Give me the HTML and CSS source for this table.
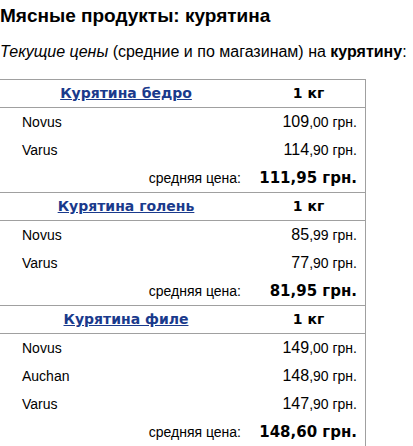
FILE: index.html
```html
<!DOCTYPE html>
<html lang="uk">
<head>
<meta charset="utf-8">
<title>Мясные продукты: курятина</title>
<link rel="stylesheet" href="styles.css">
</head>
<body>
<h1 class="title">Мясные продукты: курятина</h1>
<p class="intro"><em>Текущие цены</em> (средние и по магазинам) на <strong>курятину</strong>:</p>
<table class="prices">
  <colgroup><col class="col-name"><col class="col-price"></colgroup>
  <tbody>
    <tr class="head"><td class="prod"><a href="#">Курятина бедро</a></td><td class="unit">1 кг</td></tr>
    <tr><td class="shop">Novus</td><td class="price"><span class="int">109</span>,00 грн.</td></tr>
    <tr><td class="shop">Varus</td><td class="price"><span class="int">114</span>,90 грн.</td></tr>
    <tr><td class="avg-label">средняя цена:</td><td class="avg">111,95 грн.</td></tr>

    <tr class="head"><td class="prod"><a href="#">Курятина голень</a></td><td class="unit">1 кг</td></tr>
    <tr><td class="shop">Novus</td><td class="price"><span class="int">85</span>,99 грн.</td></tr>
    <tr><td class="shop">Varus</td><td class="price"><span class="int">77</span>,90 грн.</td></tr>
    <tr><td class="avg-label">средняя цена:</td><td class="avg">81,95 грн.</td></tr>

    <tr class="head"><td class="prod"><a href="#">Курятина филе</a></td><td class="unit">1 кг</td></tr>
    <tr><td class="shop">Novus</td><td class="price"><span class="int">149</span>,00 грн.</td></tr>
    <tr><td class="shop">Auchan</td><td class="price"><span class="int">148</span>,90 грн.</td></tr>
    <tr><td class="shop">Varus</td><td class="price"><span class="int">147</span>,90 грн.</td></tr>
    <tr><td class="avg-label">средняя цена:</td><td class="avg">148,60 грн.</td></tr>
  </tbody>
</table>
</body>
</html>
```
FILE: styles.css
```css
html, body {
  margin: 0;
  padding: 0;
  background: #fff;
}
body {
  font-family: "Liberation Sans", Arial, sans-serif;
  color: #000;
}
.title {
  margin: 5px 0 0;
  font-size: 19px;
  line-height: 22px;
  font-weight: bold;
}
.intro {
  margin: 16px 0 0;
  font-size: 16px;
  line-height: 18px;
}
.prices {
  margin-top: 18px;
  width: 366px;
  border-collapse: separate;
  border-spacing: 0;
  border-right: 1px solid #a0a0a0;
  table-layout: fixed;
}
.col-name { width: 252px; }
.prices td {
  padding: 0;
  font-size: 14px;
  line-height: 28px;
  vertical-align: middle;
}
.head td {
  border-top: 1px solid #a0a0a0;
  border-bottom: 1px solid #a0a0a0;
  line-height: 27px;
  font-family: "DejaVu Sans", Verdana, sans-serif;
  font-weight: bold;
  text-align: center;
}
.prod a {
  color: #1a3a8c;
  text-decoration: underline;
}
.unit {
  color: #000;
}
.shop {
  padding-left: 22px !important;
}
.price {
  text-align: right;
  padding-right: 8px !important;
}
.int {
  font-size: 16px;
}
.avg-label {
  text-align: right;
  padding-right: 11px !important;
}
.avg {
  text-align: right;
  padding-right: 8px !important;
  font-family: "DejaVu Sans", Verdana, sans-serif;
  font-weight: bold;
  font-size: 15px !important;
}
```
